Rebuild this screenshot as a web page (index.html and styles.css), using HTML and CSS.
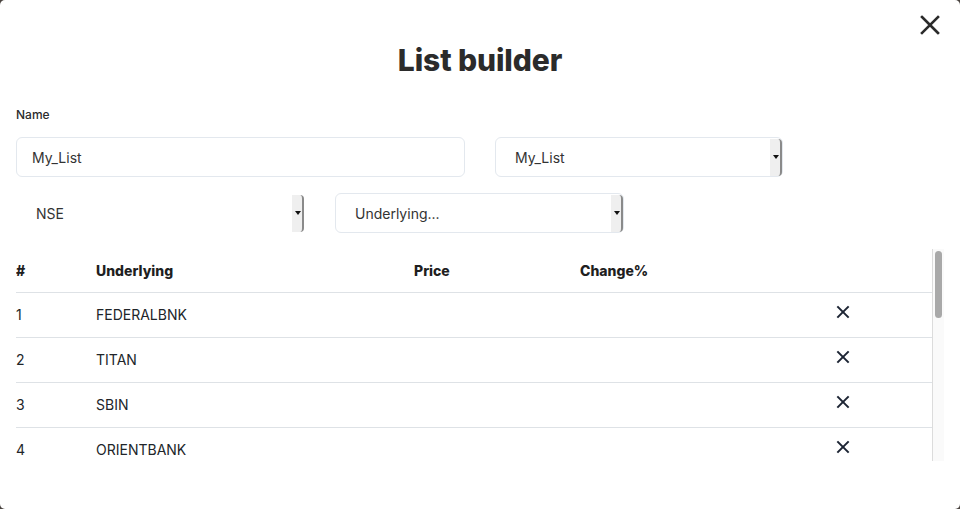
FILE: index.html
```html
<!DOCTYPE html>
<html lang="en">
<head>
    <meta charset="UTF-8">
    <title>List builder</title>
    <link rel="stylesheet" href="styles.css">
</head>
<body>
<div class="modal">
    <button class="close" aria-label="Close">
        <svg width="20" height="20" viewBox="0 0 20 20"><path d="M2 2L18 18M18 2L2 18" stroke="#2b2b2b" stroke-width="2.6" stroke-linecap="square"/></svg>
    </button>
    <h2 class="title">List builder</h2>

    <label class="label" for="listName">Name</label>
    <div class="row">
        <input id="listName" class="field name-field" type="text" value="My_List">
        <div class="select list-select">
            <span class="select-text">My_List</span>
            <span class="arrow"></span>
        </div>
    </div>
    <div class="row">
        <div class="select plain">
            <span class="select-text">NSE</span>
            <span class="arrow"></span>
        </div>
        <div class="select">
            <span class="select-text">Underlying...</span>
            <span class="arrow"></span>
        </div>
    </div>

    <div class="table-wrap">
        <div class="table-scroll">
            <table class="list-table">
                <colgroup>
                    <col style="width:80px">
                    <col style="width:318px">
                    <col style="width:166px">
                    <col style="width:218px">
                    <col style="width:90px">
                    <col>
                </colgroup>
                <thead>
                <tr>
                    <th>#</th>
                    <th>Underlying</th>
                    <th>Price</th>
                    <th>Change%</th>
                    <th></th>
                    <th></th>
                </tr>
                </thead>
                <tbody>
                <tr><td>1</td><td>FEDERALBNK</td><td></td><td></td><td class="remove"><span class="x"></span></td><td></td></tr>
                <tr><td>2</td><td>TITAN</td><td></td><td></td><td class="remove"><span class="x"></span></td><td></td></tr>
                <tr><td>3</td><td>SBIN</td><td></td><td></td><td class="remove"><span class="x"></span></td><td></td></tr>
                <tr class="last"><td>4</td><td>ORIENTBANK</td><td></td><td></td><td class="remove"><span class="x"></span></td><td></td></tr>
                </tbody>
            </table>
        </div>
        <div class="scrollbar"><span class="thumb"></span></div>
    </div>
</div>
</body>
</html>
```

FILE: styles.css
```css
* {
    margin: 0;
    padding: 0;
    box-sizing: border-box;
}

html,
body {
    width: 960px;
    height: 509px;
    background-color: #4a4440;
    overflow: hidden;
}

body {
    font-family: Inter, "Open Sans", sans-serif;
    color: #212529;
}

.modal {
    position: relative;
    width: 960px;
    height: 509px;
    background-color: #fff;
    border-radius: 5px;
    padding: 42px 16px 0;
}

.close {
    position: absolute;
    top: 15px;
    right: 20px;
    width: 20px;
    height: 20px;
    border: 0;
    background: none;
    cursor: pointer;
}

.close svg {
    display: block;
}

.title {
    margin-bottom: 28px;
    font-size: 30px;
    line-height: 36px;
    font-weight: 800;
    text-align: center;
    color: #2b2b2b;
    letter-spacing: -0.1px;
}

.label {
    display: block;
    font-size: 12px;
    line-height: 18px;
    font-weight: 500;
    color: #2b2b2b;
    margin-bottom: 13px;
}

.row {
    display: flex;
    gap: 30px;
    margin-bottom: 16px;
}

.field {
    height: 40px;
    border: 1px solid #e3e8ee;
    border-radius: 6px;
    background: #fff;
    font-family: inherit;
    font-size: 14px;
    color: #333;
    outline: none;
}

.name-field {
    width: 449px;
    padding-left: 15px;
}

.select {
    position: relative;
    width: 289px;
    height: 40px;
    border: 1px solid #e3e8ee;
    border-radius: 6px;
    display: flex;
    align-items: center;
    padding-left: 19px;
    font-size: 14px;
    color: #333;
}

.select.plain {
    border-color: #fff;
}

.list-select {
    width: 288px;
}

/* 下拉按钮 */
.arrow {
    position: absolute;
    top: 1px;
    right: 0;
    width: 12px;
    height: 37px;
    background-color: #efefef;
    border-right: 2px solid #8a8a8a;
    border-radius: 0 4px 4px 0;
}

.arrow::after {
    content: "";
    position: absolute;
    left: 3px;
    top: 16px;
    border-left: 3px solid transparent;
    border-right: 3px solid transparent;
    border-top: 4px solid #111;
}

.table-wrap {
    display: flex;
    height: 212px;
}

.table-scroll {
    width: 916px;
    height: 212px;
    overflow: hidden;
}

/* 模拟的滚动条 */
.scrollbar {
    width: 12px;
    height: 212px;
    background-color: #fafafa;
    border-left: 1px solid #dcdcdc;
    padding: 2px 2px 0 2px;
}

.thumb {
    display: block;
    height: 67px;
    background-color: #a9a9a9;
    border-radius: 4px;
}

.list-table {
    width: 916px;
    border-collapse: collapse;
    table-layout: fixed;
    font-size: 14px;
}

.list-table th {
    height: 43px;
    text-align: left;
    font-weight: 800;
    font-size: 14px;
    color: #1f1f1f;
    border-bottom: 1px solid #dee2e6;
}

.list-table td {
    height: 45px;
    border-bottom: 1px solid #dee2e6;
    color: #212529;
}

.list-table tr.last td {
    border-bottom: 0;
}

.remove {
    text-align: center;
}

.x {
    display: inline-block;
    position: relative;
    width: 14px;
    height: 14px;
    margin-top: -9px;
    vertical-align: middle;
}

.x::before,
.x::after {
    content: "";
    position: absolute;
    left: -1px;
    top: 6px;
    width: 16px;
    height: 2px;
    background-color: #1c2433;
    transform: rotate(45deg);
}

.x::after {
    transform: rotate(-45deg);
}
```
